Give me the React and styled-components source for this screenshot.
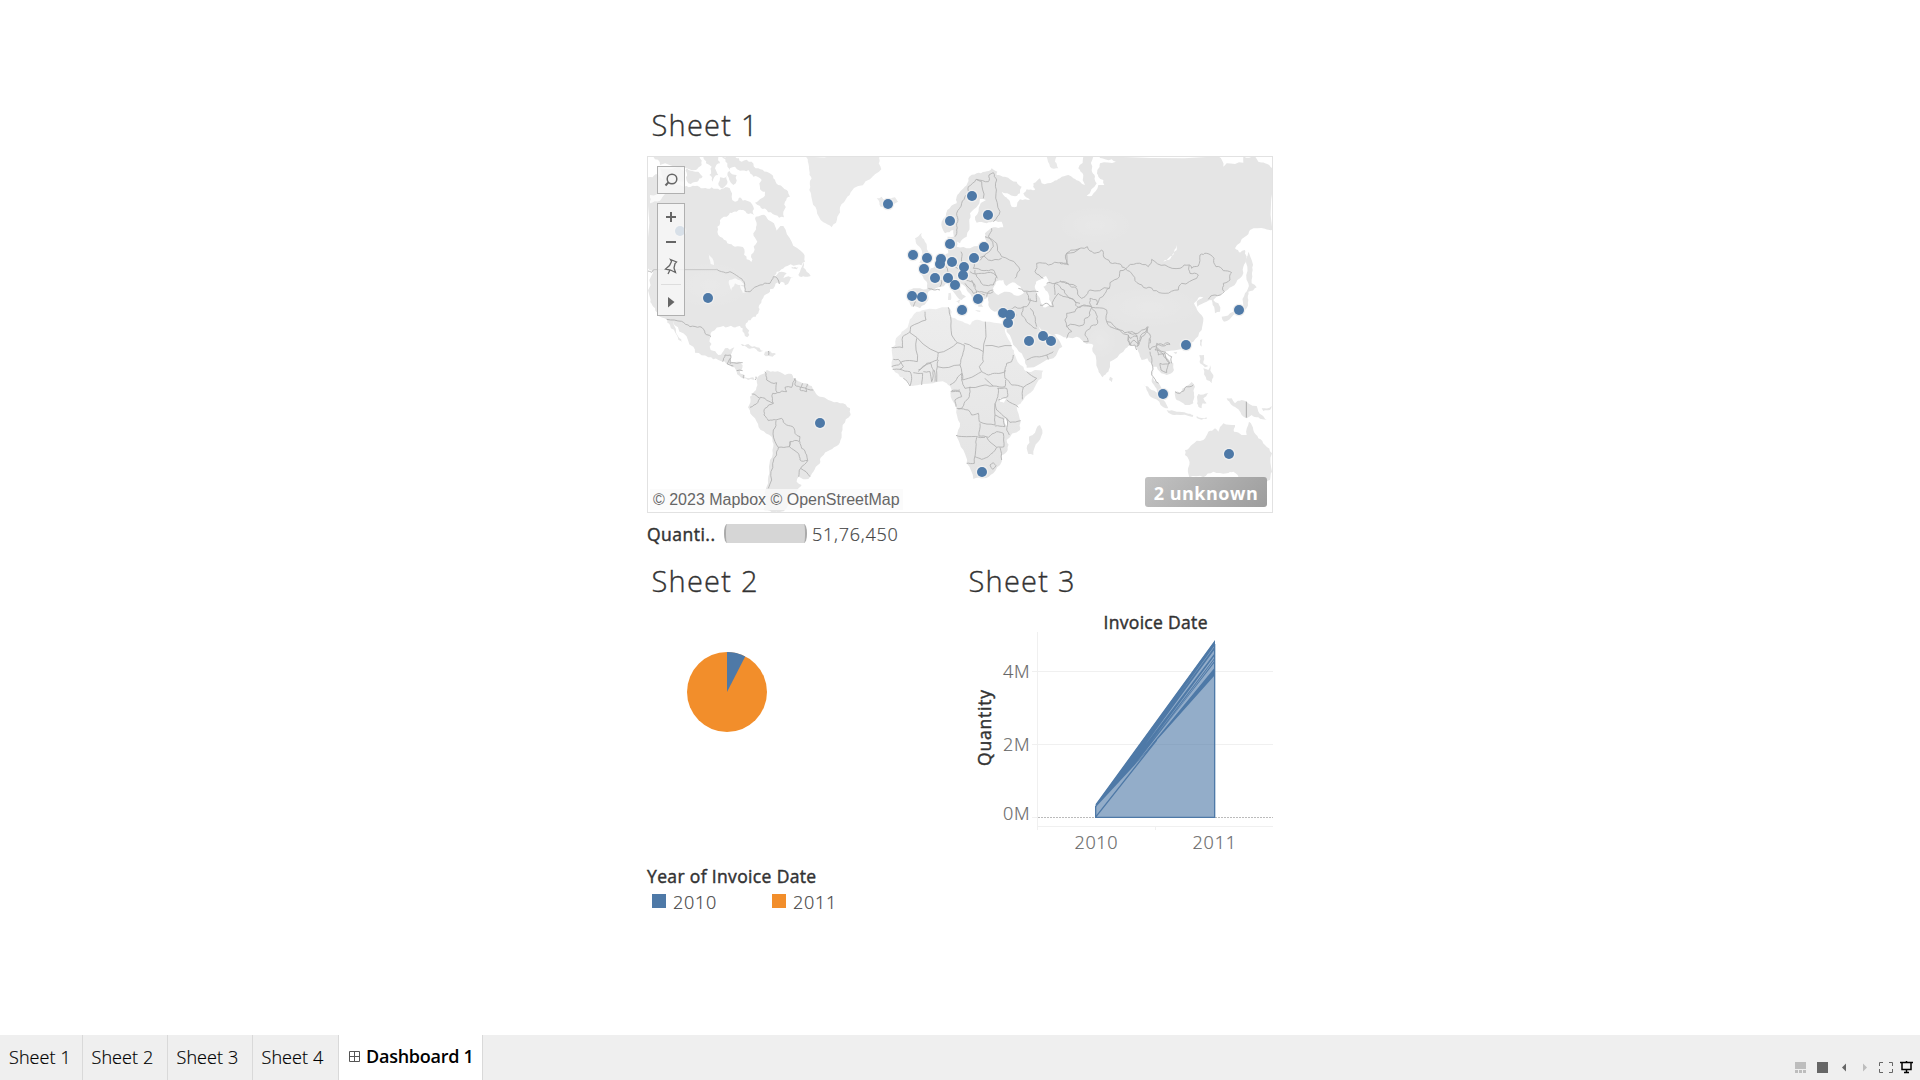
import React from "react";
import styled, { createGlobalStyle } from "styled-components";

const Global = createGlobalStyle`
  *{box-sizing:border-box}
  body{margin:0;background:#fff;overflow:hidden;font-family:"Open Sans","Noto Sans",sans-serif;color:#333}
  svg{display:block}
`;
const Page = styled.div`display:flex;flex-direction:column;width:1920px;height:1080px;background:#fff;`;
const Dashboard = styled.main`flex:1;width:626px;margin-left:647px;padding-top:105px;display:flex;flex-direction:column;`;
const Title = styled.h2`margin:0;padding-left:4.5px;height:${p => p.$h}px;font-size:29px;line-height:40px;font-weight:300;letter-spacing:1.25px;color:#333;-webkit-text-stroke:.35px #333;white-space:nowrap;`;
const MapFrame = styled.section`position:relative;width:626px;height:357px;overflow:hidden;border:1px solid #e2e2e2;`;
const MapLayer = styled.div`position:absolute;inset:-1px;`;
const Tools = styled.div`position:absolute;left:9px;top:9px;display:flex;flex-direction:column;gap:9px;`;
const ToolBox = styled.div`width:28px;height:${p => p.$h}px;border:1px solid #b0b0b0;background:rgba(247,247,247,.82);`;
const Credit = styled.div`position:absolute;left:2px;bottom:2px;width:253px;height:21px;padding-left:3px;background:rgba(250,250,250,.8);font:16px/21px "Liberation Sans",Arial,sans-serif;letter-spacing:-.01px;color:#666;white-space:nowrap;`;
const Unknown = styled.div`position:absolute;right:5px;bottom:5px;width:122px;height:30px;border-radius:3px;background:linear-gradient(135deg,#c2c2c2,#9d9d9d);color:#fff;font-size:18px;font-weight:700;line-height:32px;text-align:center;white-space:nowrap;letter-spacing:.5px;`;
const SizeLegend = styled.div`display:flex;align-items:center;height:19px;margin-top:11px;font-size:17px;`;
const Strong = styled.span`display:block;font-weight:400;font-size:17.5px;line-height:22px;letter-spacing:${p => p.$ls ?? 0.48}px;-webkit-text-stroke:.45px #333;white-space:nowrap;color:#333;`;
const Light = styled.span`font-weight:300;font-size:18px;line-height:20px;letter-spacing:${p => p.$ls || 0}px;color:#444;-webkit-text-stroke:.2px #444;white-space:nowrap;`;
const LegendName = styled.div`width:77px;padding-top:1px;`;
const Capsule = styled.div`width:83px;height:19px;margin-right:5px;background:#d6d6d6;border:solid #aaa;border-width:0 2px;border-radius:3px / 9px;`;
const Row = styled.div`display:flex;margin-top:18px;height:304px;`;
const Cell = styled.section`width:${p => p.$w}px;`;
const Chart = styled.div`margin-left:-4px;`;
const ColorLegend = styled.section`height:50px;`;
const Swatches = styled.div`display:flex;padding-left:5px;`;
const Item = styled.div`display:flex;align-items:center;gap:7px;width:120px;height:29px;`;
const Swatch = styled.i`width:14px;height:14px;margin-bottom:2px;background:${p => p.$c};`;
const Tabs = styled.footer`height:45px;display:flex;background:#efefef;`;
const Tab = styled.div`width:${p => p.$w}px;padding-left:${p => p.$p || 8}px;border-right:1px solid #d9d9d9;background:${p => p.$on ? "#fff" : "#efefef"};display:flex;align-items:center;gap:6px;padding-bottom:${p => p.$on ? 3 : 1}px;font-size:18px;font-weight:${p => p.$on ? 600 : 300};-webkit-text-stroke:${p => p.$on ? 0 : 0.2}px #000;letter-spacing:${p => p.$on ? -0.25 : 0.08}px;color:#000;white-space:nowrap;`;
const Controls = styled.div`margin-left:auto;width:140px;padding-top:5px;`;

const BLUE = "#4e79a7", ORANGE = "#f28e2b";

const rnd = (a, b) => { const v = Math.sin(a * 12.9898 + b * 78.233) * 43758.5453; return v - Math.floor(v) - 0.5; };
function rough(str, close, amp = 0.3) {
  const n = str.trim().split(/[\s,]+/).map(Number);
  let pts = [];
  for (let i = 0; i < n.length; i += 2) pts.push([n[i], n[i + 1]]);
  if (close) pts.push(pts[0]);
  for (let k = 0; k < 2; k++) {
    const out = [pts[0]];
    for (let i = 1; i < pts.length; i++) {
      const [a, b] = pts[i - 1], [c, d] = pts[i], len = Math.hypot(c - a, d - b);
      if (len > 10) { const j = Math.min(len * amp, 12) * rnd(a + c, b + d); out.push([(a + c) / 2 - ((d - b) / len) * j, (b + d) / 2 + ((c - a) / len) * j]); }
      out.push(pts[i]);
    }
    pts = out;
  }
  return "M" + pts.map(p => p.map(v => v.toFixed(1)).join(" ")).join("L") + (close ? "Z" : "");
}
const tr = (x, y) => `translate(${x} ${y}) scale(.33333)`;
const Land = ({ d, f = "#e6e6e6", amp = 0.3 }) => d.map((s, i) => <path key={i} d={rough(s, true, amp)} fill={f} />);
const Lines = ({ d, amp = 0.3 }) => d.map((s, i) => <path key={i} d={rough(s, false, amp)} fill="none" stroke="#b0b0b0" strokeWidth="2.6" strokeLinejoin="round" />);

const americaLand = [
  "23 232 48 222 60 232 100 255 140 258 165 258 190 265 215 262 240 270 262 262 272 272 275 290 285 305 300 292 312 310 322 318 310 330 290 335 270 338 245 355 232 380 240 410 262 430 285 440 313 448 320 478 334 486 340 458 352 425 340 400 350 375 347 350 365 345 385 360 402 370 410 400 430 378 455 425 490 460 495 485 470 495 435 500 410 515 398 535 425 515 440 520 430 535 462 530 435 556 425 545 405 558 390 568 385 580 365 600 358 615 355 640 335 655 318 670 318 682 328 705 322 712 308 685 300 678 280 682 250 678 215 695 210 715 212 750 235 765 255 745 283 742 275 760 270 780 300 785 308 795 300 820 315 832 340 832 350 840 340 839 310 835 290 815 270 795 235 780 205 772 165 758 160 740 130 700 100 662 115 710 128 728 110 705 90 675 80 658 52 645 40 620 32 600 28 540 38 512 23 505",
  "40 170 178 170 185 195 168 210 120 205 60 195", "60 205 110 202 135 215 130 245 100 252 70 245", "140 205 175 215 188 230 172 245 145 250 138 232",
  "190 170 235 170 240 190 225 205 235 225 218 245 208 225 215 200 198 190", "240 232 260 228 262 250 248 265 235 250", "245 170 285 170 305 185 335 185 355 205 380 215 400 235 415 255 440 270 450 290 435 305 430 335 432 352 405 345 380 330 360 318 345 308 365 295 375 275 360 262 365 240 340 230 325 210 300 212 285 200 268 210 262 190", "268 212 290 225 280 255 268 240", "290 308 315 300 340 320 342 345 320 340 298 330",
  "475 525 490 487 500 515 512 528 495 530", "455 500 475 502 470 508 455 505",
  "302 733 325 732 350 742 378 752 360 756 335 745 315 738", "375 755 390 752 408 762 385 768 372 764",
];
const greenland = "497 170 718 170 716 190 724 208 690 238 642 264 622 290 600 322 592 350 575 382 550 367 530 330 515 295 508 270 515 235 508 212 505 190";
const southAmerica = "350 240 360 225 380 210 405 215 435 225 455 222 470 240 490 250 515 258 525 275 540 290 565 300 600 310 630 325 632 345 608 375 605 405 595 435 570 450 545 470 540 490 520 515 505 537 490 538 476 530 470 545 485 555 470 575 455 585 445 600 435 630 415 637 395 637 370 630 380 560 388 520 390 480 400 440 395 410 362 390 345 355 324 322 330 290 348 270";
const eurasia = "245 215 262 180 290 160 290 140 305 120 322 100 325 85 350 70 375 65 395 55 412 65 410 75 435 80 470 95 485 110 480 130 460 138 435 130 425 125 435 140 450 155 455 170 470 170 480 148 510 150 490 130 500 118 525 120 520 100 540 85 545 100 580 95 600 85 625 75 640 85 660 95 675 105 670 75 655 55 670 19 1075 19 1090 50 1100 40 1150 38 1150 19 1185 19 1195 35 1215 40 1237 55 1237 240 1215 236 1170 240 1155 260 1125 295 1140 308 1155 300 1160 320 1150 350 1140 385 1115 410 1090 425 1070 440 1060 450 1075 460 1080 485 1065 490 1058 465 1055 450 1040 455 1025 462 1012 470 1010 455 1030 442 1020 440 1002 460 1015 485 1030 505 1025 540 1000 575 978 590 950 600 930 602 918 604 915 615 940 640 942 660 920 675 900 665 890 650 880 650 878 665 880 685 895 700 910 720 920 745 900 735 885 710 875 690 873 640 862 625 845 630 835 605 825 585 805 588 790 605 750 635 745 665 728 682 715 660 698 605 700 585 680 582 665 570 650 560 600 555 575 555 545 540 540 535 535 528 549 545 565 560 585 552 600 575 607 590 580 625 500 653 495 630 470 595 440 545 430 495 415 485 395 480 385 462 385 440 360 450 370 470 355 470 335 440 320 420 300 400 290 395 300 420 318 440 305 450 280 425 265 400 235 412 205 425 205 450 180 475 155 470 150 440 145 420 160 415 200 418 200 395 185 375 205 365 225 350 245 320 265 310 262 285 262 260 285 262 290 290 330 295 380 275 375 250 400 232 430 232 425 215 405 212 380 220 350 218 345 200 360 165 378 150 360 147 330 190 328 215 320 260 300 280 285 270 280 240 255 250";
const euIslands = ["50 145 65 140 75 150 105 142 114 155 85 178 62 170", "165 265 185 248 195 275 205 305 217 330 195 342 178 338 187 312 172 285", "147 308 165 298 175 310 170 328 148 330", "560 20 590 19 585 35 595 55 570 50", "265 430 272 428 272 450 264 450", "283 452 303 448 298 462", "345 480 362 482 360 486"];
const water = ["398 420 408 395 430 390 440 408 465 398 492 428 470 437 440 425 415 435", "528 395 558 378 567 395 550 410 565 430 575 465 550 472 540 445 525 415", "700 19 695 60 705 80 710 100 680 137 695 138 715 105 733 105 730 90 715 80 712 60 720 40 768 35 755 28 720 24 718 19", "950 285 940 315 910 335 930 328 950 300"];
const euBorders = ["270 375 258 350 250 335", "285 260 290 240 293 215 290 190 305 160 318 135 325 110 348 88 365 95 370 145", "350 88 385 95 387 75 400 68 410 90 408 130 420 185 400 215", "395 235 385 260 410 280 425 320 470 345 480 360 465 385", "375 260 390 265 400 290 380 310 365 325 345 335 340 355 372 362 400 360 410 380 400 405", "303 305 305 335 285 350 300 360 325 350", "355 325 372 318 385 330 425 325", "330 365 365 370 400 370 412 385", "315 400 340 430 365 425 400 425", "335 390 345 415 350 430 375 435", "345 360 350 380 370 405 400 405", "315 390 335 395 342 410", "205 415 225 420 240 420", "235 375 245 395 240 410", "160 430 165 450 160 470", "380 440 385 425 400 420", "475 415 510 425 535 425", "500 425 505 450 530 455 530 430", "425 480 465 470 500 470 510 445", "490 470 485 495 505 520 530 535", "470 495 445 500 450 520", "510 475 525 500 530 530", "585 435 585 400 605 395 650 410", "550 385 525 365 530 340 565 345 605 338 625 345 620 310 660 295"];
const asiaBorders = ["0 340 20 342 22 308 45 300 82 290 90 303 110 308 124 300 130 318 150 338 180 342 197 357 180 362 178 380 150 398 148 415 90 420 75 440 65 445 50 415 25 400 0 392", "-60 465 -40 460 -20 470 -5 430 15 440 45 455 55 472 75 468 95 470 90 445 110 450 110 465 135 430 148 415", "-40 400 -15 400 0 410 20 435 60 460", "197 357 230 340 265 350 275 328 315 345 360 355 388 345 395 355 415 348 420 315 440 310 462 325 468 350 490 362 515 368 510 390 490 400 493 425 465 435 445 448", "197 357 218 375 225 392 250 412 280 422 315 430 355 420 365 400 410 385 415 375 390 370 388 345", "20 490 45 485 55 472 75 465 95 472 140 480 140 515 180 540 210 550 240 545 262 530 272 560 270 580", "20 490 20 530 70 525 75 505 90 495 95 472", "95 475 112 500 108 525 82 540 75 555 85 575 70 575", "20 530 35 545 20 565", "140 515 150 530 205 555 210 565 230 560 225 550 205 545", "205 558 210 585 225 585 230 600", "262 535 245 560 230 590", "285 600 290 580 310 585 325 578 330 585", "285 600 310 612 318 625 330 640"];
const seBorders = ["205 45 210 75 222 60 235 72 230 45", "232 80 240 55 260 30 265 20", "268 55 270 90 290 75 310 78 330 70", "270 95 275 130 275 165 288 185 296 190", "290 85 295 105 315 100 328 128 320 158 303 150 300 130 330 128", "288 80 310 95 335 110 334 130", "345 215 360 220 378 200 400 195"];
const seIslands = ["565 -205 575 -180 578 -150 575 -110 590 -98 565 -85 565 -60 555 -30 520 -15 492 5 485 -10 520 -25 550 -45 555 -80 565 -110 562 -160", "420 60 427 58 425 80 420 75", "150 170 158 175 155 187 147 180", "418 105 432 105 430 130 445 138 435 142 420 130", "430 145 445 150 450 135 460 165 455 190 440 180", "250 193 275 210 300 230 325 265 310 262 280 235 260 210", "320 270 350 275 380 280 400 285 398 291 350 284 325 278", "410 288 440 292 440 297 410 294", "345 215 360 218 380 198 395 186 405 200 402 225 400 250 375 255 350 240", "415 222 445 220 430 235 440 250 428 250 425 265 415 260 412 240", "500 235 515 235 525 250 545 240 590 258 605 285 620 300 595 292 575 285 560 295 545 285 535 268 515 255", "605 265 635 258 630 270 610 273", "340 97 352 95 348 103", "375 390 395 375 430 360 445 335 465 325 475 335 490 310 525 315 522 335 545 345 560 345 567 305 580 330 595 355 615 375 636 400 636 455 630 480 610 490 590 485 560 495 540 480 520 455 500 460 460 455 430 472 388 472 388 435 375 405", "580 530 610 525 600 550 588 548"];
const africa = "170 35 190 30 265 22 275 35 270 50 300 62 330 75 345 60 375 65 430 72 435 95 455 140 465 165 490 200 500 215 550 212 545 235 520 270 490 300 470 320 482 365 480 390 440 420 443 450 425 465 425 485 400 520 370 535 340 537 320 490 310 450 290 410 300 370 290 325 272 290 275 270 260 250 235 245 220 250 155 258 120 230 95 200 95 150 108 115 125 95 145 75 160 45";
const africaBorders = ["195 35 198 60 152 80 150 98 235 158 232 180 200 190 175 210", "265 22 272 50 275 105 292 128 235 158", "292 128 313 135 308 165 300 195 232 200 235 180", "313 130 370 155 376 65", "376 137 455 137", "370 155 370 185 358 200 365 215 325 235 308 240 300 195", "365 215 385 225 410 220 435 215 440 190 455 185 460 165", "435 210 435 235 455 255 490 262 530 235 500 215", "375 235 400 258 435 260 437 240", "490 262 487 298", "270 255 285 245 305 220 305 240 315 265 375 255 400 258", "300 270 275 272", "95 143 128 143 128 110 150 95", "170 115 172 185 125 185 115 195 95 200", "100 178 115 178 130 200 120 208 98 208", "120 208 150 215 155 235 150 258 130 235", "160 218 188 220 185 255", "175 215 190 198 212 190 220 210 215 245", "190 215 210 215 215 245", "222 210 225 245", "232 200 230 245", "272 275 300 275 305 290 285 300 288 320", "330 260 328 290 315 305 305 325 290 325", "295 327 325 330 335 345 355 340 358 365 405 375 405 345 410 300 415 280 415 265", "412 265 440 265 443 290 415 300", "440 300 475 322", "405 310 410 330 440 355 450 367 482 362", "360 370 357 408 385 412 410 395 430 400 432 440 410 442 380 412", "288 406 320 410 375 412", "350 412 348 440 343 490 320 490", "345 470 365 478 385 470 410 442", "405 345 430 355 435 380 405 378", "440 355 440 390 448 405", "420 442 425 480", "390 495 400 488 408 497 398 508 390 495", "500 180 530 170 560 165 580 155", "560 165 565 178"];
const naBorders = ["230 508 245 515 270 515 295 530 312 545 315 575 330 575 360 555 390 550 400 530 412 535 418 552", "80 658 125 664 150 680 180 680 195 700 213 710", "248 785 255 765 272 765 270 790 290 790 308 788", "270 775 262 792 280 798", "290 812 308 812", "310 835 312 825", "348 830 346 840", "385 753 386 765", "23 513 35 517 40 510"];
const saBorders = ["375 215 380 240 410 248 412 278 440 275 435 262 455 262 465 235", "465 235 465 255 485 262 520 270", "488 250 480 270 500 275 502 252", "335 282 360 295 342 315 330 322", "360 292 375 295 400 310 398 280 412 278", "400 310 375 325 372 345 385 362 408 360 425 355 440 375 462 385 465 400 480 410 478 425 450 425 448 440 415 442 410 435 400 390 408 362", "450 425 448 440 475 460 480 480 503 482 500 465 485 445 480 425", "415 442 410 465 398 490 395 540 385 565", "503 482 482 505 510 530", "482 505 476 530"];
const dots = [[860,150,"84 162 336 138 384 195 270 213 270 282 372 291 159 315 201 324 243 327 240 342 276 336 342 324 192 357 312 351 309 376 225 384 264 384 285 405 156 438 186 441 354 447 306 480 429 489 450 494 444 519 549 558 507 573 573 573"],[1060,150,"537 480 378 585"],[1060,320,"309 222 507 402"],[640,300,"540 369 204 -6"],[860,300,"366 516"],[640,100,"120 393"]]
  .flatMap(([x, y, s]) => { const n = s.split(" ").map(Number), r = []; for (let i = 0; i < n.length; i += 2) r.push([x + n[i] / 3, y + n[i + 1] / 3]); return r; });

const WorldMap = () => (
  <svg width="626" height="357" viewBox="647 156 626 357">
    <defs>
      <radialGradient id="tone"><stop offset="0" stopColor="#fff" stopOpacity=".13" /><stop offset="1" stopColor="#fff" stopOpacity="0" /></radialGradient>
      <linearGradient id="south" x1="0" y1="0" x2="0" y2="1"><stop offset="0" stopColor="#ededed" /><stop offset="1" stopColor="#e4e4e4" /></linearGradient>
    </defs>
    <g transform={tr(640, 100)}>
      <Land d={americaLand} amp={0.5} /><Land d={[greenland]} f="#e9e9e9" />
      <Land d={["268 540 285 535 305 545 312 555 295 555 285 550 275 580 270 560", "202 458 212 470 222 495 212 492", "30 285 75 282 60 302 30 310", "300 555 312 560 320 580 308 578"]} f="#fafafa" />
      <path d="M40 509H230" stroke="#c4c4c4" strokeWidth="3" />
      <Lines d={naBorders} />
    </g>
    <g transform={tr(640, 300)}><Land d={[southAmerica]} /><Lines d={saBorders} /></g>
    <g transform={tr(860, 150)}><Land d={[eurasia]} f="#e5e5e5" /><Land d={euIslands} f="#e9e9e9" /><Land d={water} f="#fff" /><Lines d={euBorders} /></g>
    <g transform={tr(860, 300)}><Land d={[africa]} f="url(#south)" /><Land d={["540 375 547 390 535 425 520 465 505 462 500 445 507 410 525 398"]} /><Land d={["420 295 438 297 432 308 420 305", "435 355 442 370 446 392 438 375"]} f="#fff" /><Lines d={africaBorders} amp={0.16} /></g>
    <g transform={tr(1060, 150)}><Lines d={asiaBorders} amp={0.4} /></g>
    <g transform={tr(1060, 320)}><Land d={seIslands} f="#e6e6e6" /><Lines d={seBorders} /><path d="M559 245V293" stroke="#aaa" strokeWidth="3" /></g>
    <g fill="url(#tone)"><ellipse cx="1150" cy="307" rx="55" ry="22" /><ellipse cx="710" cy="285" rx="45" ry="25" /><ellipse cx="1095" cy="225" rx="40" ry="20" /><ellipse cx="1100" cy="340" rx="18" ry="20" /></g>
    {dots.map(([x, y], i) => <circle key={i} cx={x} cy={y} r="6.3" fill="#efefef" />)}
    {dots.map(([x, y], i) => <circle key={i} cx={x} cy={y} r="5" fill={BLUE} />)}
  </svg>
);

const AreaChart = () => (
  <svg width="313" height="255" viewBox="960 605 313 255" fontFamily='"Open Sans","Noto Sans",sans-serif'>
    <g fontSize="17.5" fontWeight="400" fill="#333" stroke="#333" strokeWidth=".45">
      <text x="1103.5" y="629" textLength="104">Invoice Date</text>
      <text transform="translate(991 766) rotate(-90)" textLength="76">Quantity</text>
    </g>
    <g fontSize="18" fontWeight="300" fill="#666" stroke="#666" strokeWidth=".2">
      <text x="1003" y="678" textLength="26.5">4M</text><text x="1003" y="751" textLength="26.5">2M</text><text x="1003" y="820" textLength="26.5">0M</text>
      <text x="1074.5" y="849" textLength="43">2010</text><text x="1192.5" y="849" textLength="43.5">2011</text>
    </g>
    <g stroke="#f0f0f0" shapeRendering="crispEdges"><path d="M1032 671.5H1273M1032 744.5H1273M1037.5 632V830M1032 817.5H1037M1037 826.5H1273M1155.5 826V830" /></g>
    <path d="M1038 817.5H1273" stroke="#bbb" strokeDasharray="2 1" />
    <g transform={tr(960, 560)}>
      <path d="M407 735L765 242V772H407Z" fill={BLUE} fillOpacity=".61" />
      <path d="M407 732L765 240V345L585 547L540 598L407 742Z" fill={BLUE} />
      <path d="M520 620L765 306V322ZM555 555L765 267V278ZM570 550L765 286V292ZM575 550L765 296V300ZM650 415L765 255V258Z" fill="#93adca" />
      <path d="M407 738V772H764V252M408 770L590 540" fill="none" stroke={BLUE} strokeWidth="4" />
    </g>
  </svg>
);

export default function App() {
  return (
    <Page>
      <Global />
      <Dashboard>
        <Title $h={51}>Sheet 1</Title>
        <MapFrame>
          <MapLayer><WorldMap /></MapLayer>
          <Tools>
            <ToolBox $h={28}>
              <svg width="26" height="26" viewBox="0 0 26 26" fill="none" stroke="#666" strokeWidth="1.5"><circle cx="14" cy="12" r="4.8" /><path d="M10.4 15.3L7.5 18.5" strokeWidth="2" /></svg>
            </ToolBox>
            <ToolBox $h={113}>
              <svg width="26" height="111" viewBox="0 0 26 111" fill="none" stroke="#666">
                <path d="M13 8V18M8 13H18M8 38H18" strokeWidth="2" />
                <path d="M12.5 55.5L18.5 58L17 59.5L16 64L17.5 68.5L12.5 66L7.5 65L11.5 61.5L13.5 57.5ZM12 66L10 70" strokeWidth="1.3" />
                <path d="M3 80.5H23" stroke="#ddd" /><path d="M10 93L16.5 98L10 103.5Z" fill="#666" stroke="none" />
              </svg>
            </ToolBox>
          </Tools>
          <Credit>© 2023 Mapbox © OpenStreetMap</Credit>
          <Unknown>2 unknown</Unknown>
        </MapFrame>
        <SizeLegend><LegendName><Strong>Quanti..</Strong></LegendName><Capsule /><Light $ls={0.78}>51,76,450</Light></SizeLegend>
        <Row>
          <Cell $w={317}>
            <Title $h={90}>Sheet 2</Title>
            <svg width="160" height="82" viewBox="647 651 160 82"><circle cx="727" cy="692" r="40" fill={ORANGE} /><path d="M727 692V652A40 40 0 0 1 745.2 656.4Z" fill={BLUE} /></svg>
          </Cell>
          <Cell $w={309}>
            <Title $h={44}>Sheet 3</Title>
            <Chart><AreaChart /></Chart>
          </Cell>
        </Row>
        <ColorLegend>
          <Strong $ls={0.35}>Year of Invoice Date</Strong>
          <Swatches><Item><Swatch $c={BLUE} /><Light $ls={0.75}>2010</Light></Item><Item><Swatch $c={ORANGE} /><Light $ls={0.75}>2011</Light></Item></Swatches>
        </ColorLegend>
      </Dashboard>
      <Tabs>
        <Tab $w={83} $p={9}>Sheet 1</Tab><Tab $w={85} $p={8.5}>Sheet 2</Tab><Tab $w={85} $p={8.5}>Sheet 3</Tab><Tab $w={86} $p={8.5}>Sheet 4</Tab>
        <Tab $w={144} $p={10} $on><svg width="11" height="11" viewBox="0 0 11 11" fill="none" stroke="#555"><path d="M.5.5H10.5V10.5H.5ZM5.5 0V11M0 5.5H11" /></svg>Dashboard 1</Tab>
        <Controls>
          <svg width="140" height="40" viewBox="0 0 140 40">
            <path d="M15 22h11v7H15zM15 30h3v3h-3zM19 30h3v3h-3zM23 30h3v3h-3z" fill="#bdbdbd" />
            <path d="M37 22h11v11H37z" fill="#666" /><path d="M66 23.5v8L62 27.5z" fill="#666" /><path d="M83 23.5v8l4-4z" fill="#bdbdbd" />
            <path d="M99.5 26V22.5H103M109 22.5h3.5V26M112.5 29v3.5H109M103 32.5H99.5V29" fill="none" stroke="#666" />
            <path d="M120 22.5h13M122 23v6.5h9V23M126.5 29v3M124 32.5h5M126.5 21v2" fill="none" stroke="#000" strokeWidth="1.5" />
          </svg>
        </Controls>
      </Tabs>
    </Page>
  );
}
